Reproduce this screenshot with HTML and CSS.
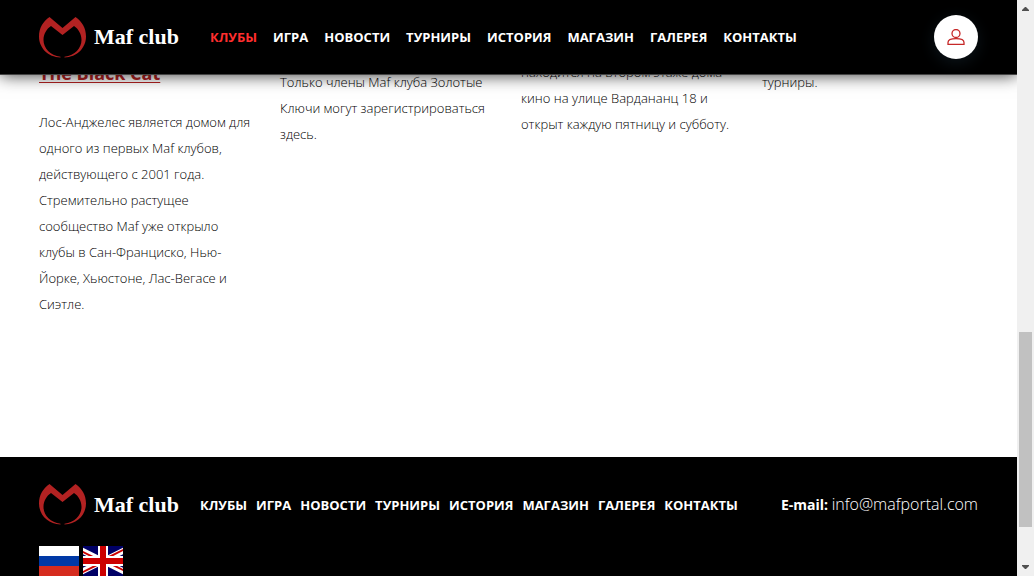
FILE: index.html
```
<!DOCTYPE html>
<html lang="ru">
<head>
<meta charset="utf-8">
<title>Maf club</title>
<link rel="stylesheet" href="styles.css">
</head>
<body>
<svg width="0" height="0" class="defs" aria-hidden="true">
  <symbol id="logo" viewBox="0 0 47 41">
    <path d="M23.500 11 L10.500 0 C4 4.500 0 11 0 19.500 C0 31 9 40 21.500 40.500 V39.700 C11 38.500 4.500 31 4.500 23 C4.500 17 7.500 12 12 9 L23.500 18 L35 9 C39.500 12 42.500 17 42.500 23 C42.500 31 36 38.500 25.500 39.700 V40.500 C38 40 47 31 47 19.500 C47 11 43 4.500 36.500 0 Z"/>
  </symbol>
</svg>
<div class="window">
  <div class="page">
    <header class="header">
      <a class="brand" href="#"><svg class="brand-mark"><use href="#logo"/></svg><span>Maf club</span></a>
      <nav class="nav">
        <a class="active" href="#">КЛУБЫ</a>
        <a href="#">ИГРА</a>
        <a href="#">НОВОСТИ</a>
        <a href="#">ТУРНИРЫ</a>
        <a href="#">ИСТОРИЯ</a>
        <a href="#">МАГАЗИН</a>
        <a href="#">ГАЛЕРЕЯ</a>
        <a href="#">КОНТАКТЫ</a>
      </nav>
      <button class="user" type="button" aria-label="Профиль">
        <svg width="18" height="16" viewBox="0 0 18 16"><circle cx="9" cy="4.500" r="4"/><path d="M1 15.300 V13.500 C1 10.500 4 9.700 9 9.700 C14 9.700 17 10.500 17 13.500 V15.300 Z"/></svg>
      </button>
    </header>
    <main class="clubs">
      <article class="club">
        <h2><a href="#">The Black Cat</a></h2>
        <p>Лос-Анджелес является домом для одного из первых Maf клубов, действующего с 2001 года. Стремительно растущее сообщество Maf уже открыло клубы в Сан-Франциско, Нью-Йорке, Хьюстоне, Лас-Вегасе и Сиэтле.</p>
      </article>
      <article class="club lower">
        <p>Только члены Maf клуба Золотые Ключи могут зарегистрироваться здесь.</p>
      </article>
      <article class="club">
        <p>находится на втором этаже дома кино на улице Вардананц 18 и открыт каждую пятницу и субботу.</p>
      </article>
      <article class="club lower">
        <p>турниры.</p>
      </article>
    </main>
    <footer class="footer">
      <div class="footer-row">
        <a class="brand" href="#"><svg class="brand-mark"><use href="#logo"/></svg><span>Maf club</span></a>
        <nav class="nav">
          <a href="#">КЛУБЫ</a>
          <a href="#">ИГРА</a>
          <a href="#">НОВОСТИ</a>
          <a href="#">ТУРНИРЫ</a>
          <a href="#">ИСТОРИЯ</a>
          <a href="#">МАГАЗИН</a>
          <a href="#">ГАЛЕРЕЯ</a>
          <a href="#">КОНТАКТЫ</a>
        </nav>
        <p class="email"><strong>E-mail:</strong> <a href="mailto:info@mafportal.com">info@mafportal.com</a></p>
      </div>
      <div class="languages">
        <a href="#" aria-label="Русский"><svg width="40" height="30" viewBox="0 0 40 30"><path fill="#fff" d="M0 0h40v10H0z"/><path fill="#0039a6" d="M0 10h40v10H0z"/><path fill="#d52b1e" d="M0 20h40v10H0z"/></svg></a>
        <a href="#" aria-label="English"><svg width="40" height="30" viewBox="10 0 40 30"><path fill="#006" d="M0 0h60v30H0z"/><path stroke="#fff" stroke-width="6" d="M0 0 L60 30 M60 0 L0 30"/><path stroke="#c00" stroke-width="2" d="M0 1 L30 16 M60 29 L30 14 M60 -1 L30 14 M0 31 L30 16"/><path stroke="#fff" stroke-width="10" d="M30 0v30M0 15h60"/><path stroke="#c00" stroke-width="6" d="M30 0v30M0 15h60"/></svg></a>
      </div>
    </footer>
  </div>
  <div class="scrollbar" aria-hidden="true">
    <svg width="7" height="4" viewBox="0 0 7 4"><path d="M0 4V3L3 0H4L7 3V4z"/></svg>
    <div class="track"><div class="thumb"></div></div>
    <svg width="7" height="4" viewBox="0 0 7 4"><path d="M0 0V1L3 4H4L7 1V0z"/></svg>
  </div>
</div>
</body>
</html>
```
FILE: styles.css
```
* { box-sizing: border-box; }

body {
  margin: 0;
  font-family: "Open Sans", sans-serif;
  font-size: 13px;
  color: #000;
  background: #fff;
}

a { color: inherit; text-decoration: none; }
h2, p { margin: 0; }
svg { display: block; }
.defs { position: absolute; }

.window { display: flex; height: 100vh; }

.page {
  position: relative;
  display: flex;
  flex: 1;
  flex-direction: column;
  min-width: 0;
  overflow: hidden;
}

.header {
  position: absolute;
  z-index: 1;
  top: 0;
  left: 0;
  right: 0;
  display: flex;
  align-items: center;
  padding: 15px 39px;
  color: #fff;
  background: #000;
  border-bottom: 1px solid #444;
  box-shadow: 0 0 16px rgba(0, 0, 0, 0.8);
}

.brand {
  display: flex;
  align-items: center;
  gap: 8px;
  font-family: "Liberation Serif", serif;
  font-size: 22px;
  font-weight: 700;
  line-height: 26px;
  white-space: nowrap;
}

.brand-mark { width: 47px; height: 41px; fill: #b22222; }

.nav { display: flex; font-weight: 700; line-height: 18px; white-space: nowrap; }
.header .nav { gap: 16px; margin-left: 31px; }
.footer .nav { gap: 9px; margin-left: 21px; }
.nav .active { color: #ff2e2e; }

.user {
  display: grid;
  place-items: center;
  width: 44px;
  height: 44px;
  margin-left: auto;
  padding: 0;
  border: 0;
  border-radius: 50%;
  background: #fff;
  box-shadow: 0 4px 16px rgba(40, 70, 90, 0.3);
}

.user svg { fill: none; stroke: #c62828; stroke-width: 1.3; }

.clubs {
  display: grid;
  flex: 1;
  grid-template-columns: repeat(4, 1fr);
  align-items: start;
  gap: 28px;
  padding: 59px 42px 0 39px;
}

.club { font-weight: 300; line-height: 26px; }
.lower { padding-top: 10px; }

.club h2 {
  margin-bottom: 22px;
  font-size: 18px;
  font-weight: 700;
  line-height: 28px;
  color: #b22222;
}

.club h2 a { text-decoration: underline 1px; text-underline-offset: 2px; }

.footer { padding: 27px 39px 0; color: #fff; background: #000; }
.footer-row { display: flex; align-items: center; }

.email { margin-left: auto; font-size: 14px; line-height: 22px; white-space: nowrap; }
.email a { font-size: 16px; font-weight: 300; }

.languages { display: flex; gap: 4px; margin-top: 21px; }

.scrollbar {
  display: flex;
  flex-direction: column;
  align-items: center;
  gap: 7px;
  width: 17px;
  padding: 7px 0;
  background: #f0f0f0;
}

.scrollbar svg { fill: #505050; }
.track { display: grid; flex: 1; grid-template-rows: 314fr 195fr 31fr; }
.thumb { grid-row: 2; width: 13px; background: #c1c1c1; }
```
